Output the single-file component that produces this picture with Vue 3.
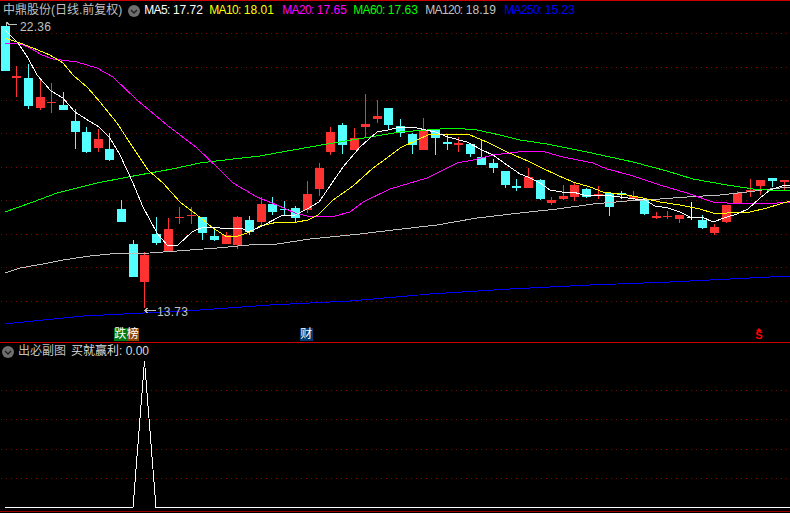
<template>
  <div class="terminal">
    <section class="pane main-pane">
      <svg class="chart" viewBox="0 1 790 341" width="790" height="341" aria-hidden="true">
        <line v-for="y in mainGrid" :key="y" class="grid" x1="1" x2="790" :y1="y + 0.5" :y2="y + 0.5" />
        <g v-for="c in candles" :key="c[0]" :fill="tones[c[5]]">
          <rect :x="c[0]" :y="c[1]" width="1" :height="c[2] - c[1]" />
          <rect :x="c[0] - 4" :y="c[3]" width="9" :height="c[4] - c[3]" />
        </g>
        <polyline v-for="l in lines" :key="l.color" class="ma" :stroke="l.color" :points="l.points" />
        <path class="mark" d="M6 22V26M6 22L10 25M10 24.500H17" />
        <text class="price" x="20" y="31">22.36</text>
        <path class="mark" d="M144.500 310.500L148 308M144.500 310.500L148 313M145 310.500H156" />
        <text class="price" x="157" y="316">13.73</text>
      </svg>

      <header class="legend">
        <span class="stock">中鼎股份(日线.前复权)</span>
        <span class="toggle"><svg viewBox="0 0 12 12" width="12" height="12"><circle cx="6" cy="6" r="6" fill="#6f6f6f" /><path d="M3 5l3 3 3-3" fill="none" stroke="#222" stroke-width="1.500" /></svg></span>
        <span v-for="m in legend" :key="m.name" class="ma-item" :style="{ color: m.color, width: m.width + 'px' }"><b>{{ m.name }}:</b> {{ m.value }}</span>
      </header>

      <span class="tag tag-bang"><i class="green">跌</i><i class="brown">榜</i></span>
      <span class="tag tag-cai"><i class="navy">财</i></span>
      <span class="tag-dollar">S</span>
    </section>

    <section class="pane sub-pane">
      <svg class="chart" viewBox="0 344 790 167" width="790" height="167" aria-hidden="true">
        <line v-for="y in subGrid" :key="y" class="grid" x1="1" x2="790" :y1="y + 0.5" :y2="y + 0.5" />
        <polyline class="ma" stroke="#fff" points="5,508.500 133,508.500 144.500,362 156,508.500 790,508.500" />
      </svg>
      <header class="legend sub-legend">
        <span class="toggle"><svg viewBox="0 0 12 12" width="12" height="12"><circle cx="6" cy="6" r="6" fill="#6f6f6f" /><path d="M3 5l3 3 3-3" fill="none" stroke="#222" stroke-width="1.500" /></svg></span>
        <span class="stock">出必副图</span>
        <span class="sub-value">买就赢利: 0.00</span>
      </header>
    </section>
  </div>
</template>

<script setup>
const mainGrid = [33, 67, 100, 133, 167, 200, 234, 267, 301]
const subGrid = [391, 420, 450, 479]
const tones = { c: '#54ffff', r: '#ff3232', w: '#ffffff' }

// x, high, low, body top, body bottom, tone
const candles = [
  [5, 26, 71, 26, 71, 'c'], [16, 66, 97, 76, 78, 'r'], [28, 64, 109, 78, 106, 'c'], [40, 80, 110, 97, 108, 'r'],
  [51, 83, 113, 102, 103, 'r'], [63, 92, 110, 105, 110, 'c'], [75, 109, 149, 121, 132, 'c'], [86, 127, 153, 132, 152, 'c'],
  [98, 129, 152, 139, 148, 'r'], [109, 133, 161, 149, 160, 'c'], [121, 200, 222, 209, 222, 'c'], [133, 240, 277, 244, 277, 'c'],
  [144, 252, 308, 255, 282, 'r'], [156, 217, 245, 234, 243, 'c'], [168, 218, 252, 229, 252, 'r'], [179, 207, 224, 217, 218, 'r'],
  [191, 207, 224, 215, 216, 'r'], [202, 217, 240, 217, 233, 'c'], [214, 228, 241, 236, 240, 'c'], [226, 232, 244, 235, 244, 'r'],
  [237, 216, 249, 217, 245, 'r'], [249, 216, 235, 220, 232, 'c'], [261, 197, 227, 204, 222, 'r'], [272, 197, 215, 204, 212, 'c'],
  [284, 201, 215, 209, 210, 'c'], [295, 206, 222, 208, 218, 'c'], [307, 181, 213, 194, 210, 'r'], [319, 163, 196, 168, 189, 'r'],
  [330, 127, 155, 132, 152, 'r'], [342, 123, 154, 125, 145, 'c'], [354, 128, 150, 138, 150, 'r'], [365, 94, 138, 124, 127, 'r'],
  [377, 100, 123, 116, 119, 'r'], [388, 108, 129, 108, 125, 'c'], [400, 119, 137, 126, 133, 'c'], [412, 133, 154, 134, 145, 'c'],
  [423, 118, 150, 131, 150, 'r'], [435, 129, 155, 130, 138, 'c'], [447, 135, 150, 142, 144, 'c'], [458, 137, 152, 143, 145, 'r'],
  [470, 144, 157, 144, 154, 'c'], [481, 140, 165, 157, 165, 'c'], [493, 159, 173, 163, 168, 'c'], [505, 171, 188, 171, 185, 'c'],
  [516, 179, 191, 186, 188, 'c'], [528, 168, 188, 177, 188, 'r'], [540, 179, 200, 180, 199, 'c'], [551, 197, 205, 200, 203, 'r'],
  [563, 185, 200, 196, 199, 'r'], [574, 183, 201, 185, 197, 'r'], [586, 188, 198, 189, 197, 'c'], [598, 186, 199, 194, 196, 'r'],
  [609, 192, 216, 193, 207, 'c'], [621, 191, 199, 193, 195, 'c'], [633, 191, 200, 196, 199, 'r'], [644, 200, 215, 200, 214, 'c'],
  [656, 212, 219, 216, 218, 'r'], [667, 211, 219, 216, 217, 'r'], [679, 215, 223, 215, 219, 'r'], [691, 202, 220, 217, 218, 'w'],
  [702, 215, 229, 220, 228, 'c'], [714, 224, 235, 227, 233, 'r'], [726, 205, 223, 205, 222, 'r'], [737, 191, 203, 193, 203, 'r'],
  [750, 179, 197, 190, 192, 'r'], [760, 180, 195, 180, 186, 'r'], [772, 178, 187, 178, 181, 'c'], [784, 180, 190, 180, 182, 'r']
]

const lines = [
  { color: '#0000ff', points: '5,324 33,321 83,316 143,313 200,310 270,305 350,301 430,294 510,289 590,285 670,282 750,278 790,276' },
  { color: '#c0c0c0', points: '5,273 20,268 43,264 63,260 90,256 110,254 150,253 177,251 217,248 260,244 277,244 310,239 360,234 393,230 437,225 477,218 520,213 557,209 593,204 627,201 660,199 687,197 720,195 747,192 770,189 790,187' },
  { color: '#00ff00', points: '5,212 33,202 57,193 97,183 128,177 172,169 200,163 233,159 260,156 293,150 327,144 370,137 400,132 427,130 453,128 477,130 500,135 520,140 547,144 587,152 633,162 667,171 693,179 727,185 753,189 767,190 790,190' },
  { color: '#ff00ff', points: '5,43 18,43 30,48 42,55 53,59 77,62 97,68 113,77 137,100 167,125 197,148 220,170 233,183 257,197 277,205 295,213 307,216 335,216 350,212 363,202 390,189 427,178 457,163 473,160 493,155 527,151 545,152 563,157 593,163 607,169 630,175 660,185 687,193 713,202 727,203 777,203 790,202' },
  { color: '#ffff00', points: '5,38 20,43 33,48 50,55 63,63 73,75 88,88 100,102 117,123 130,143 148,170 163,183 180,202 197,215 213,228 227,237 238,236 250,232 260,226 278,222 297,222 308,220 318,215 333,200 353,186 373,168 387,158 400,148 417,140 430,134 453,134 470,135 487,142 507,152 530,162 542,168 557,175 573,182 590,187 603,192 627,195 643,198 660,202 680,205 700,209 713,213 727,213 750,212 767,208 790,201' },
  { color: '#ffffff', points: '5,30 18,43 28,58 37,75 51,91 63,98 75,112 86,119 99,127 110,138 120,155 127,170 133,183 143,207 157,233 167,245 178,245 192,232 203,227 220,228 243,229 248,232 260,227 283,215 295,215 307,209 319,202 343,167 360,147 377,132 388,130 400,127 417,128 435,132 448,137 467,142 482,150 493,155 507,165 520,174 528,177 540,183 550,190 562,192 573,192 587,196 603,195 620,197 635,199 645,200 655,206 668,208 680,212 690,217 702,217 713,222 727,217 737,214 748,209 760,198 770,190 782,186 790,185' }
]

const legend = [
  { name: 'MA5', value: '17.72', color: '#ffffff', width: 65 },
  { name: 'MA10', value: '18.01', color: '#ffff00', width: 73 },
  { name: 'MA20', value: '17.65', color: '#ff00ff', width: 71 },
  { name: 'MA60', value: '17.63', color: '#00ff00', width: 72 },
  { name: 'MA120', value: '18.19', color: '#c0c0c0', width: 79 },
  { name: 'MA250', value: '15.23', color: '#0000ff', width: 80 }
]
</script>

<style scoped>
.terminal{width:790px;height:513px;background:#000;display:flex;flex-direction:column;font-family:"Liberation Sans","Noto Sans CJK SC",sans-serif;font-size:12px;overflow:hidden}
.pane{position:relative}
.main-pane{height:343px;border-top:1px solid #c80000;border-bottom:1px solid #c80000;box-sizing:border-box}
.sub-pane{height:168px;border-bottom:1px solid #9a0000;box-sizing:content-box}
.chart{display:block}
.grid{stroke:#8c0000;stroke-width:1;stroke-dasharray:1 4;shape-rendering:crispEdges}
.ma{fill:none;stroke-width:1;shape-rendering:crispEdges}
.mark{fill:none;stroke:#c0c0c0;stroke-width:1;shape-rendering:crispEdges}
.price{fill:#c0c0c0;font-size:12px;letter-spacing:.2px}
.legend{position:absolute;left:3px;top:2px;height:15px;line-height:15px;display:flex;align-items:center;white-space:nowrap}
.stock{color:#c0c0c0}
.toggle{display:flex;margin:0 4px 0 6px}
.ma-item{display:block;flex:none}
.ma-item b{font-weight:400;letter-spacing:-.7px}
.sub-legend{left:2px;top:1px}
.sub-legend .toggle{margin:0 4px 0 0}
.sub-value{color:#dcdcdc;margin-left:5px}
.tag{position:absolute;top:327px;display:flex;height:13px;line-height:13px;color:#fff;font-size:12px}
.tag i{font-style:normal;width:12.500px;display:block;text-align:center}
.tag-bang{left:114px}
.tag-cai{left:300px}
.green{background:#007a10}
.brown{background:#8a4500}
.navy{background:#003a70}
.tag-dollar{position:absolute;left:755px;top:329px;width:8px;height:11px;line-height:11px;color:#ff0000;font-size:11px;font-weight:700;text-align:center}
.tag-dollar::before{content:"";position:absolute;left:1px;top:-2px;border:3px solid transparent;border-top:0;border-bottom:3px solid #ff0000}
</style>
